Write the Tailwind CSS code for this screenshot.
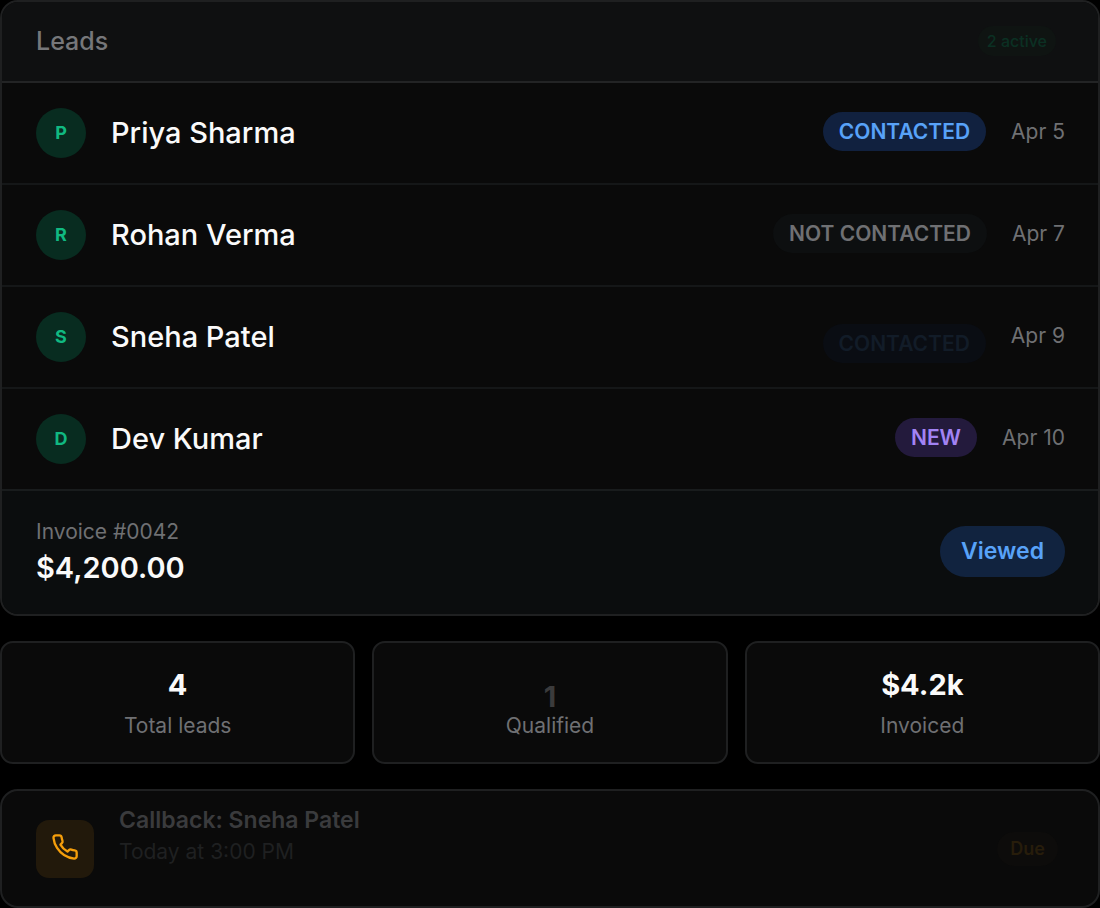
<!DOCTYPE html>
<html lang="en">
<head>
<meta charset="utf-8">
<meta name="viewport" content="width=device-width, initial-scale=1">
<title>Leads</title>
<script src="https://cdn.jsdelivr.net/npm/@tailwindcss/browser@4"></script>
</head>
<body class="bg-black font-['Inter',sans-serif] text-[#fafafa]">
<main class="flex flex-col gap-[25px]">
  <section class="overflow-hidden rounded-[18px] border-2 border-[#1f2021] bg-[#0a0a0a]">
    <header class="flex h-[81px] items-center justify-between border-b-2 border-[#232425] bg-[#0f1011] pr-[42px] pb-0.5 pl-[34px]">
      <h1 class="text-[25px] leading-8 font-medium text-[#76777a]">Leads</h1>
      <span class="rounded-full bg-[#0f1412] px-[9px] py-[3px] text-base leading-6 font-medium text-[#0b3023]">2 active</span>
    </header>
    <ul>
      <li class="flex h-[102px] items-center border-b-2 border-[#151718] pr-[33px] pl-[34px]">
        <span class="flex size-[50px] items-center justify-center rounded-full bg-[#082c20] pb-0.5 text-[18px] font-bold text-[#10b981]">P</span>
        <span class="ml-[25px] grow text-[29px] leading-10 font-medium">Priya Sharma</span>
        <span class="mb-1 rounded-full bg-[#11213f] px-4 py-1 text-[21px] leading-[31px] font-semibold text-[#58a2f8]">CONTACTED</span>
        <time class="mb-0.5 ml-[25px] text-[21px] leading-8 text-[#6f7073]">Apr 5</time>
      </li>
      <li class="flex h-[102px] items-center border-b-2 border-[#151718] pr-[33px] pl-[34px]">
        <span class="flex size-[50px] items-center justify-center rounded-full bg-[#082c20] pb-0.5 text-[18px] font-bold text-[#10b981]">R</span>
        <span class="ml-[25px] grow text-[29px] leading-10 font-medium">Rohan Verma</span>
        <span class="mb-1 rounded-full bg-[#0d0f10] px-4 py-1 text-[21px] leading-[31px] font-semibold text-[#6f7073]">NOT CONTACTED</span>
        <time class="mb-0.5 ml-[25px] text-[21px] leading-8 text-[#6f7073]">Apr 7</time>
      </li>
      <li class="flex h-[102px] items-center border-b-2 border-[#151718] pr-[33px] pl-[34px]">
        <span class="flex size-[50px] items-center justify-center rounded-full bg-[#082c20] pb-0.5 text-[18px] font-bold text-[#10b981]">S</span>
        <span class="ml-[25px] grow text-[29px] leading-10 font-medium">Sneha Patel</span>
        <span class="mt-[13px] rounded-full bg-[#0a0d13] px-4 py-1 text-[21px] leading-[31px] font-semibold text-[#121c28]">CONTACTED</span>
        <time class="mb-0.5 ml-[25px] text-[21px] leading-8 text-[#6f7073]">Apr 9</time>
      </li>
      <li class="flex h-[102px] items-center border-b-2 border-[#191c1d] pr-[33px] pl-[34px]">
        <span class="flex size-[50px] items-center justify-center rounded-full bg-[#082c20] pb-0.5 text-[18px] font-bold text-[#10b981]">D</span>
        <span class="ml-[25px] grow text-[29px] leading-10 font-medium">Dev Kumar</span>
        <span class="mb-1 rounded-full bg-[#231a3c] px-4 py-1 text-[21px] leading-[31px] font-semibold text-[#a283f4]">NEW</span>
        <time class="mb-0.5 ml-[25px] text-[21px] leading-8 text-[#6f7073]">Apr 10</time>
      </li>
    </ul>
    <footer class="flex h-[123px] items-center justify-between bg-[#0b0d0e] pr-[33px] pb-0.5 pl-[34px]">
      <div>
        <p class="text-[21px] leading-8 text-[#6f7073]">Invoice #0042</p>
        <p class="text-[29px] leading-10 font-semibold">$4,200.00</p>
      </div>
      <span class="rounded-full bg-[#11233f] px-[21px] py-2 text-[23px] leading-[35px] font-semibold text-[#58a2f8]">Viewed</span>
    </footer>
  </section>

  <section class="grid grid-cols-3 gap-[17px]">
    <div class="flex h-[123px] flex-col items-center rounded-[13px] border-2 border-[#1f2021] bg-[#0a0a0a] pt-[22px]">
      <strong class="text-[29px] leading-10 font-bold">4</strong>
      <span class="mt-[5px] text-[21px] leading-8 text-[#6f7073]">Total leads</span>
    </div>
    <div class="flex h-[123px] flex-col items-center rounded-[13px] border-2 border-[#1f2021] bg-[#0a0a0a] pt-[34px]">
      <strong class="text-[29px] leading-10 font-bold text-[#3b3b3c]">1</strong>
      <span class="-mt-[7px] text-[21px] leading-8 text-[#6f7073]">Qualified</span>
    </div>
    <div class="flex h-[123px] flex-col items-center rounded-[13px] border-2 border-[#1f2021] bg-[#0a0a0a] pt-[22px]">
      <strong class="text-[29px] leading-10 font-bold">$4.2k</strong>
      <span class="mt-[5px] text-[21px] leading-8 text-[#6f7073]">Invoiced</span>
    </div>
  </section>

  <section class="flex h-[119px] items-center rounded-[18px] border-2 border-[#1f2021] bg-[#0a0a0a] pr-10 pl-[34px]">
    <span class="flex size-[58px] items-center justify-center rounded-[13px] bg-[#22190b] pb-[3px]">
      <svg class="size-7" viewBox="0 0 24 24" fill="none" stroke="#f59e0b" stroke-width="2" stroke-linecap="round" stroke-linejoin="round" aria-hidden="true"><path d="M22 16.92v3a2 2 0 0 1-2.18 2 19.79 19.79 0 0 1-8.63-3.07 19.5 19.5 0 0 1-6-6 19.79 19.79 0 0 1-3.07-8.67A2 2 0 0 1 4.11 2h3a2 2 0 0 1 2 1.72 12.84 12.84 0 0 0 .7 2.81 2 2 0 0 1-.45 2.11L8.09 9.91a16 16 0 0 0 6 6l1.27-1.27a2 2 0 0 1 2.11-.45 12.84 12.84 0 0 0 2.81.7A2 2 0 0 1 22 16.92z"/></svg>
    </span>
    <div class="mb-[25px] ml-[25px] grow">
      <p class="text-[23px] leading-8 font-semibold text-[#3a3b3d]">Callback: Sneha Patel</p>
      <p class="text-[21px] leading-8 text-[#1f2021]">Today at 3:00 PM</p>
    </div>
    <span class="rounded-full bg-[#0d0c0b] px-[13px] py-[3px] text-[18px] leading-7 font-semibold text-[#271d0b]">Due</span>
  </section>
</main>
</body>
</html>
